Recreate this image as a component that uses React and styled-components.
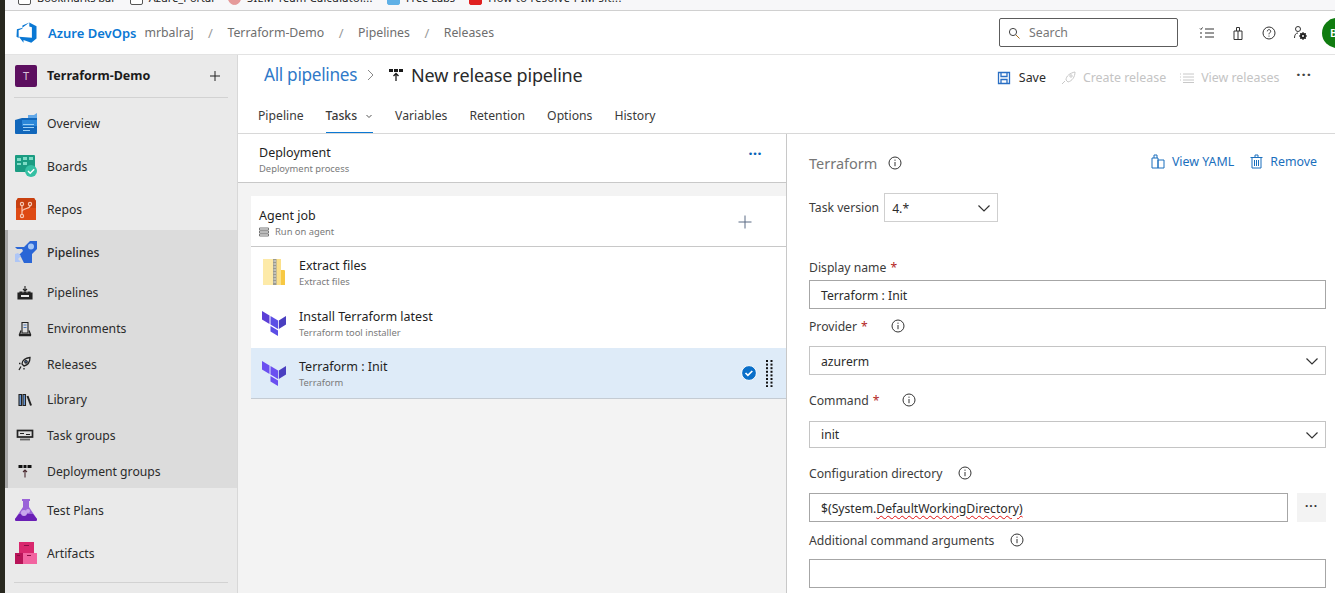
import React from "react";
import styled, { createGlobalStyle } from "styled-components";

const Global = createGlobalStyle`
  html, body { margin: 0; padding: 0; background: #fff; overflow: hidden; }
  body { font-family: "Noto Sans", "Open Sans", sans-serif; font-size: 12px; color: #252423; }
  * { box-sizing: border-box; }
`;

const Page = styled.div`display: flex; width: 1335px; height: 593px; overflow: hidden; background: #fff;`;
const WindowEdge = styled.div`width: 5px; flex: none; background: #28281f;`;
const Shell = styled.div`flex: 1; min-width: 0; display: flex; flex-direction: column;`;

const BrowserBar = styled.div`
  height: 11px; flex: none; background: #f7f7f9; border-bottom: 1px solid #d0d0d0;
  display: flex; align-items: flex-end; gap: 14px; padding-left: 13px; overflow: hidden;
`;
const Bookmark = styled.span`
  display: flex; align-items: center; gap: 6px; font-size: 11px; line-height: 16px; height: 16px;
  letter-spacing: ${p => p.$ls || 0}px; margin-bottom: -1px; transform: translateY(-5px); color: #222; white-space: nowrap;
`;
const BookmarkIcon = styled.i`display: block; width: 13px; height: 13px; border-radius: ${p => p.$round ? "50%" : "2px"}; background: ${p => p.$c}; border: 1px solid ${p => p.$b || p.$c};`;

const Header = styled.header`
  height: 44px; flex: none; display: flex; align-items: center; border-bottom: 1px solid #e3e3e3;
  padding-left: 11px;
`;
const Brand = styled.span`font-size: 13px; font-weight: 600; color: #0a78d4; margin-left: 11px;`;
const Crumb = styled.span`font-size: 12.3px; color: #6e6e6e;`;
const CrumbSep = styled.span`font-size: 13px; color: #9a9a9a; margin: 0 14.5px;`;
const Org = styled(Crumb)`margin-left: 8px;`;
const Spacer = styled.div`flex: 1;`;
const SearchBox = styled.div`
  width: 179px; height: 29px; border: 1px solid #5c5c5c; border-radius: 2px; display: flex; align-items: center;
  padding-left: 8px; gap: 9px; color: #777; font-size: 12.3px; margin-right: 21px;
`;
const HeaderIcons = styled.div`display: flex; align-items: center; gap: 15px;`;
const Avatar = styled.div`
  width: 30px; height: 30px; flex: none; border-radius: 50%; background: #107c10; color: #fff; font-size: 11px; font-weight: 600;
  display: flex; align-items: center; padding-left: 8px; margin-left: -1px; margin-right: -17px;
`;

const Body = styled.div`flex: 1; min-height: 0; display: flex;`;
const Sidebar = styled.nav`width: 233px; flex: none; background: #eaeaea; border-right: 1px solid #d8d8d8; overflow: hidden;`;
const ProjectRow = styled.div`height: 43px; margin: 0 9px; display: flex; align-items: center; border-bottom: 1px solid #d2d2d2; padding-left: 1px; padding-bottom: 1px;`;
const ProjectBadge = styled.div`
  width: 22px; height: 22px; border-radius: 2px; background: #5c0f5f; color: #d9c0d9; font-size: 11px;
  display: flex; align-items: center; justify-content: center;
`;
const ProjectName = styled.span`font-size: 12.5px; font-weight: 700; color: #1b1b1b; margin-left: 10px; flex: 1;`;
const PlusMark = styled.span`display: flex; margin-right: 7px;`;
const MainItem = styled.div`height: 43px; display: flex; align-items: center; padding: 1px 0 0 10px; gap: 10px; font-size: 12.2px; color: #2b2b2b;`;
const ActiveGroup = styled.div`background: #dcdcdc; border-left: 3px solid #a8a8a8; height: 258px;`;
const ActiveHead = styled(MainItem)`padding-left: 7px; font-weight: 500;`;
const SubList = styled.div`display: flex; flex-direction: column; margin-top: 2px;`;
const SubItem = styled.div`height: 35.7px; display: flex; align-items: center; gap: 12px; padding-left: 7px; font-size: 12.2px; color: #2b2b2b;`;
const SideRule = styled.div`height: 1px; margin: 8px 9px 0; background: #d2d2d2;`;
const FirstItems = styled.div`padding-top: 3px;`;

const Main = styled.main`flex: 1; min-width: 0; display: flex; flex-direction: column;`;
const TitleRow = styled.div`height: 45px; flex: none; display: flex; align-items: center; padding: 0 0 6px 26px;`;
const AllLink = styled.span`font-size: 17.2px; color: #2f79c8; letter-spacing: -0.3px;`;
const Chevron = styled.span`display: flex; margin: 0 12px 0 9px;`;
const TitleText = styled.span`font-size: 18px; color: #2a2a2a; margin-left: 7px; letter-spacing: -0.2px;`;
const Actions = styled.div`display: flex; align-items: center; margin-top: 6px; margin-right: 23px;`;
const Action = styled.span`display: flex; align-items: center; gap: ${p => p.$gap || 6}px; font-size: 12.4px; color: ${p => p.$off ? "#c4c4c4" : "#2b2b2b"}; margin-right: ${p => p.$mr || 14}px;`;
const MoreDots = styled.span`font-size: 15px; font-weight: 700; color: #444; letter-spacing: 1px; line-height: 1; margin-left: 3px; margin-top: -6px;`;

const Tabs = styled.div`height: 34px; flex: none; display: flex; gap: 22px; padding-left: 20px; border-bottom: 1px solid #d8d8d8;`;
const Tab = styled.div`
  height: 33px; display: flex; align-items: center; gap: ${p => p.$on ? 8 : 6}px; font-size: 12.2px; color: #3a3a3a;
  padding-bottom: ${p => p.$on ? 1 : 3}px;
  ${p => p.$on && "border-bottom: 1px solid #0a78d4; font-weight: 500;"}
`;

const Split = styled.div`flex: 1; min-height: 0; display: flex;`;
const LeftPanel = styled.section`width: 549px; flex: none; background: #f3f3f3; border-right: 1px solid #c8c8c8;`;
const DeployHead = styled.div`height: 49px; background: #fff; border-bottom: 1px solid #c8c8c8; display: flex; align-items: center; padding: 2px 24px 0 21px;`;
const TitleStack = styled.div`flex: 1; display: flex; flex-direction: column;`;
const Big = styled.span`font-size: 12.5px; line-height: 18px; color: #1f1f1f;`;
const Small = styled.span`font-size: 9.4px; line-height: 11px; color: #7a7a7a; display: flex; align-items: center; gap: 6px; margin-top: 1px;`;
const Dots3 = styled.span`font-size: 14px; font-weight: 800; color: #0a63b8; letter-spacing: 0.5px; line-height: 1; margin-top: -10px;`;
const Job = styled.div`
  margin: 13px 0 0 13px; height: 51px; background: #fff; border-bottom: 1px solid #c8c8c8; display: flex; align-items: center; padding: 2px 34px 0 8px;
`;
const TaskRow = styled.div`
  margin-left: 13px; height: ${p => p.$h || 51}px; display: flex; align-items: center; padding: 0 0 ${p => p.$pb || 0}px 11px; gap: 13px;
  background: ${p => p.$on ? "#deebf8" : "#fff"}; ${p => p.$on && "border-bottom: 1px solid #c4cbd3;"}
`;
const TaskEnd = styled.div`display: flex; align-items: center; gap: 9px; padding-right: 13px;`;

const RightPanel = styled.section`flex: 1; min-width: 0; padding: 0 9px 0 22px; overflow: hidden;`;
const TaskHead = styled.div`height: 59px; display: flex; align-items: center; padding-right: 9px;`;
const TaskTitle = styled.span`font-size: 14.5px; color: #777; margin-right: 11px; margin-top: -2px;`;
const LinkAction = styled.span`display: flex; align-items: center; gap: 7px; color: #1a6fbd; font-size: 12.4px; margin-left: 16px; margin-top: -4px;`;
const TitleInfo = styled.span`display: flex; margin-top: -2px;`;
const VersionRow = styled.div`display: flex; align-items: center; gap: 5px; height: 29px;`;
const Lbl = styled.label`display: flex; align-items: center; font-size: 12.2px; color: #3c3c3c; height: ${p => p.$h || 18}px; margin-top: ${p => p.$mt || 0}px;`;
const Req = styled.span`color: #b3261e; margin-left: 4px;`;
const InfoWrap = styled.span`display: flex; margin-left: ${p => p.$ml || 16}px;`;
const SmallSelect = styled.div`
  width: 114px; height: 29px; border: 1px solid #cfcfcf; display: flex; align-items: center; justify-content: space-between;
  padding: 1px 6px 0 7px; font-size: 12.2px; color: #2b2b2b;
`;
const Field = styled.div`
  height: ${p => p.$h || 29}px; flex: ${p => p.$grow ? 1 : "none"}; border: 1px solid ${p => p.$soft ? "#c4c4c4" : "#a6a6a6"};
  display: flex; align-items: center; justify-content: space-between;
  padding: ${p => p.$h ? 0 : 1}px 6px 0 11px; font-size: 12.2px; color: #2b2b2b; margin-top: ${p => p.$mt || 0}px;
`;
const PathRow = styled.div`display: flex; gap: 9px; margin-top: ${p => p.$mt || 0}px;`;
const EllipsisBtn = styled.div`width: 29px; height: 29px; background: #f3f3f3; color: #333; display: flex; align-items: center; justify-content: center; font-weight: 700; font-size: 12px; letter-spacing: 1px; padding-bottom: 4px;`;
const Spell = styled.span`text-decoration: underline wavy #e01010 1px; text-underline-offset: 2px;`;

const Info = () => (
  <svg width="14" height="14" viewBox="0 0 14 14" fill="none" stroke="#333">
    <circle cx="7" cy="7" r="6" />
    <path d="M7 6v4.2" /><path d="M7 3.6v1.2" />
  </svg>
);
const Caret = ({ c = "#333", s = 14 }) => (
  <svg width={s} height={s} viewBox="0 0 14 14" fill="none" stroke={c} strokeWidth="1.2"><path d="M1.5 4.5 7 10l5.5-5.5" /></svg>
);
const Logo = () => (
  <svg width="21" height="21" viewBox="0 0 21 21" fill="#0a78d4">
    <path d="M20.5 4.2v12.4l-5.2 4.2-7.8-2.9v2.8l-4.6-5.9 13 1V5.2l-2.6-.6V.6z" />
    <path d="M13.4.6 6 6 .9 7.2.5 14.8l2.2 1.1-.1-7.6L6.4 6.8V3.4z" />
  </svg>
);
const Overview = () => (
  <svg width="22" height="22" viewBox="0 0 22 22">
    <path d="M7 6h6V3h6l3-2v20H7z" fill="#62a8e8" />
    <path d="M0 8l7-2h15v15a1 1 0 0 1-1 1H1a1 1 0 0 1-1-1z" fill="#1167bb" />
    <path d="M7 8h15v6H7z" fill="#2b87d8" />
    <path d="M8 12h11v1H8zM8 15h11v1H8zM8 18h7v1H8z" fill="#9cd0f5" />
  </svg>
);
const Boards = () => (
  <svg width="22" height="22" viewBox="0 0 22 22">
    <rect y="0" width="20" height="17" rx="1" fill="#1b9c82" />
    <path d="M2 3h4v3H2zM8 2h4v3H8zM14 2h4v3h-4zM2 8h4v2H2zM8 7h4v3H8z" fill="#7fdcc6" />
    <circle cx="16" cy="16" r="6" fill="#35c0a3" />
    <path d="m13 16 2.2 2.2 4-4" stroke="#fff" strokeWidth="1.5" fill="none" />
  </svg>
);
const Repos = () => (
  <svg width="22" height="22" viewBox="0 0 22 22">
    <path d="M3 0h16l2 3v19H1V3z" fill="#de4a14" />
    <path d="M1 3l2-3h16l2 3v7H1z" fill="#c8400f" />
    <g fill="none" stroke="#f7c9b4" strokeWidth="1.2">
      <circle cx="7" cy="6" r="1.6" /><circle cx="15" cy="6" r="1.6" /><circle cx="7" cy="18" r="1.6" />
      <path d="M7 8v8M15 8c0 3-8 2-8 6" />
    </g>
  </svg>
);
const PipelinesBig = () => (
  <svg width="22" height="22" viewBox="0 0 22 22">
    <path d="M0 6h9l6-6h7v8l-5 5v9H9L6 16l-2-2 4-4-1-2H2z" fill="#2a66d6" />
    <circle cx="16" cy="5.500" r="3" fill="#a5c6f5" />
    <path d="M3 12l3 3-3 3 3 3H0v-8z" fill="#aec6f6" />
  </svg>
);
const Flask = () => (
  <svg width="22" height="22" viewBox="0 0 22 22">
    <path d="M7 0h8v2h-1v6l8 12a2 2 0 0 1-1 2H1a2 2 0 0 1-1-2L8 8V2H7z" fill="#9a63d8" />
    <path d="M4 15h14l4 5a2 2 0 0 1-1 2H1a2 2 0 0 1-1-2z" fill="#6a1fb5" />
    <circle cx="9" cy="14" r="3" fill="#c8a6ec" /><circle cx="13" cy="12" r="2" fill="#c8a6ec" />
  </svg>
);
const Artifacts = () => (
  <svg width="22" height="22" viewBox="0 0 22 22">
    <rect x="4" y="0" width="15" height="11" fill="#d9286e" />
    <rect x="0" y="11" width="8" height="11" fill="#b81458" />
    <rect x="8" y="11" width="14" height="11" fill="#f264a0" />
    <path d="M9 3h5v1H9zM2 13h3v1H2zM12 13h4v1h-4z" fill="#8a0f45" />
  </svg>
);
const Mini = ({ children }) => (
  <svg width="20" height="16" viewBox="0 0 20 16" fill="none" stroke="#222" strokeWidth="1.1">{children}</svg>
);
const iPipe = <Mini><path d="M3 8h2V7h2v1h2V7h2v1h2V7h2v1h2v6H3z" fill="#222" /><path d="M10 1v5M8 4l2 2 2-2" /><path d="M6 11h8" stroke="#e8e8e8" strokeWidth="2" /></Mini>;
const iEnv = <Mini><path d="M7 1.500h6V12H7z" /><path d="M8.500 4h3M8.500 6.500h3" stroke="#4a76b8" /><path d="M6 9.500l-1.500 4h11l-1.500-4M4 14.500h12" strokeWidth="1.300" /></Mini>;
const iRel = <Mini><path d="M7 8c0-3.500 3.500-6 8-6.500 0 4.500-2 7.500-6 8.500z" strokeWidth="1.300" /><circle cx="11" cy="5.800" r="1.300" fill="#4a76b8" /><path d="M6 10.500l-2 3.500M5.500 7.500H4M9 12v1.500" strokeWidth="1.300" /></Mini>;
const iLib = <Mini><path d="M4 2.500h2.500v11H4zM8 2.500h2.500v11H8z" fill="#6a9ad8" /><path d="M12.500 4l3.500 9.500" strokeWidth="2" /></Mini>;
const iTask = <Mini><rect x="2.500" y="2.500" width="15" height="6.500" fill="none" strokeWidth="1.700" /><path d="M5 5.500h4M11 6.500h4" strokeWidth="1.200" /><path d="M5 11.500h10" strokeWidth="1.800" stroke="#666" /></Mini>;
const iDep = <Mini><path d="M3.500 2h4v3h-4zM8.500 2h3v3h-3zM12.500 2h4v3h-4z" fill="#111" stroke="none" /><path d="M10 14.500V7M8 9l2-2 2 2" stroke="#4a2a30" /></Mini>;

const PipeGlyph = () => (
  <svg width="16" height="14" viewBox="0 0 16 14"><path d="M1 1h4v3H1zM6 1h4v3H6zM11 1h4v3h-4z" fill="#1a1a1a" /><path d="M8 13V6M5.500 8 8 5.500 10.500 8" stroke="#1a1a1a" fill="none" strokeWidth="1.300" /></svg>
);
const Terraform = ({ on }) => (
  <svg width="24" height="26" viewBox="0 0 24 26" fill={on ? "#6a4ff0" : "#5c4ee5"}>
    <path d="M0 1l7.500 4.400v8.600L0 9.600z" fill={on ? "#6a4ff0" : "#5c3fd6"} />
    <path d="M8.500 6l7.500 4.400V19L8.500 14.600z" />
    <path d="M16.800 10.400 24 6v8.600L16.800 19z" fill="#4a3fc0" />
    <path d="M8.500 16l7.500 4.400V26L8.500 21.600z" />
  </svg>
);
const Zip = () => (
  <svg width="24" height="28" viewBox="0 0 24 28">
    <path d="M1 1h18v26H1z" fill="#fbe08a" />
    <path d="M19 12h3a1 1 0 0 1 1 1v14h-4z" fill="#f7c843" />
    <path d="M1 1h10v26H1z" fill="#fdeaa8" />
    <path d="M11 1h3.500v26H11z" fill="#9a9a90" />
    <path d="M11.500 3h2.500M11.500 6h2.500M11.500 9h2.500M11.500 12h2.500M11.500 15h2.500M11.500 18h2.500M11.500 21h2.500M11.500 24h2.500" stroke="#e6e6e0" />
  </svg>
);
const Check = () => (
  <svg width="16" height="16" viewBox="0 0 16 16"><circle cx="8" cy="8" r="7.400" fill="#0a6fc9" stroke="#fff" /><path d="m4.500 8 2.400 2.400 4.400-4.400" stroke="#fff" strokeWidth="1.700" fill="none" /></svg>
);
const Grip = () => (
  <svg width="7" height="27" viewBox="0 0 7 27" fill="#111">
    {[0, 1, 2, 3, 4, 5, 6, 7].map(i => (
      <g key={i}><rect x="0" y={i * 3.6} width="2" height="2" /><rect x="4.500" y={i * 3.6} width="2" height="2" /></g>
    ))}
  </svg>
);
const Line = ({ children, w = 16, h = 16, c = "#333", sw = 1 }) => (
  <svg width={w} height={h} viewBox={`0 0 ${w} ${h}`} fill="none" stroke={c} strokeWidth={sw}>{children}</svg>
);

const subItems = [
  [iPipe, "Pipelines"], [iEnv, "Environments"], [iRel, "Releases"],
  [iLib, "Library"], [iTask, "Task groups"], [iDep, "Deployment groups"],
];

export default function App() {
  return (
    <Page>
      <Global />
      <WindowEdge />
      <Shell>
        <BrowserBar>
          <Bookmark><BookmarkIcon $c="#fff" $b="#555" />Bookmarks bar</Bookmark>
          <Bookmark><BookmarkIcon $c="#fff" $b="#555" />Azure_Portal</Bookmark>
          <Bookmark $ls={0.3}><BookmarkIcon $round $c="#e59a9a" />SIEM Team Calculator...</Bookmark>
          <Bookmark><BookmarkIcon $c="#5fb0e6" />Free Labs</Bookmark>
          <Bookmark $ls={0.4}><BookmarkIcon $c="#e02020" />How to resolve PIM sit...</Bookmark>
        </BrowserBar>
        <Header>
          <Logo />
          <Brand>Azure DevOps</Brand>
          <Org>mrbalraj</Org>
          <CrumbSep>/</CrumbSep>
          <Crumb>Terraform-Demo</Crumb>
          <CrumbSep>/</CrumbSep>
          <Crumb>Pipelines</Crumb>
          <CrumbSep>/</CrumbSep>
          <Crumb>Releases</Crumb>
          <Spacer />
          <SearchBox>
            <Line w={12} h={12} c="#444"><circle cx="5" cy="5" r="3.600" /><path d="m8 8 3.500 3.500" stroke="#a8701f" /></Line>
            Search
          </SearchBox>
          <HeaderIcons>
            <Line><path d="M6 4h9M6 8h9M6 12h9" /><path d="M1 3.500l1 1 1.500-2M1 8h2M1 12h2" /></Line>
            <Line><path d="M4 6h8v8.500H4zM6.500 6V2.500h3V6M8 6v8" /></Line>
            <Line><circle cx="8" cy="8" r="6" /><path d="M6.300 6.300c0-2.200 3.400-2.200 3.400 0 0 1.400-1.700 1.400-1.700 3M8 10.600v1" /></Line>
            <Line><circle cx="6" cy="4" r="2.500" /><path d="M2.500 13c0-3.500 1.500-5 3.500-5" /><circle cx="11" cy="11" r="2.800" fill="#222" /><path d="M11 7v8M7 11h8M8.200 8.200l5.600 5.600M13.800 8.200l-5.600 5.600" strokeWidth="1" stroke="#222" /><circle cx="11" cy="11" r="1" fill="#fff" stroke="none" /></Line>
            <Avatar>B</Avatar>
          </HeaderIcons>
        </Header>
        <Body>
          <Sidebar>
            <ProjectRow>
              <ProjectBadge>T</ProjectBadge>
              <ProjectName>Terraform-Demo</ProjectName>
              <PlusMark><Line w={12} h={12} c="#222"><path d="M6 1v10M1 6h10" /></Line></PlusMark>
            </ProjectRow>
            <FirstItems>
              <MainItem><Overview />Overview</MainItem>
              <MainItem><Boards />Boards</MainItem>
              <MainItem><Repos />Repos</MainItem>
            </FirstItems>
            <ActiveGroup>
              <ActiveHead><PipelinesBig />Pipelines</ActiveHead>
              <SubList>
                {subItems.map(([icon, label]) => <SubItem key={label}>{icon}{label}</SubItem>)}
              </SubList>
            </ActiveGroup>
            <MainItem><Flask />Test Plans</MainItem>
            <MainItem><Artifacts />Artifacts</MainItem>
            <SideRule />
          </Sidebar>
          <Main>
            <TitleRow>
              <AllLink>All pipelines</AllLink>
              <Chevron><Line w={10} h={14} c="#888"><path d="m2 2 5 5-5 5" /></Line></Chevron>
              <PipeGlyph />
              <TitleText>New release pipeline</TitleText>
              <Spacer />
              <Actions>
                <Action $gap={8} $mr={15}>
                  <Line w={14} h={14} c="#2a6fc4" sw={1.3}><path d="M1.500 1.500h11v11h-11z" /><path d="M4 1.500v4h6v-4M4 12.500v-4h6v4" /></Line>
                  Save
                </Action>
                <Action $off>
                  <Line w={16} h={16} c="#c8c8c8"><path d="M5 10c0-4 4-7 9-8 0 5-3 9-7 10zM4 11l-3 3" /><circle cx="10" cy="6" r="1.200" /></Line>
                  Create release
                </Action>
                <Action $off>
                  <Line w={15} h={12} c="#c8c8c8"><path d="M3 2h11M3 5h11M3 8h11M3 10.500h11M0 2h1M0 5h1M0 8h1" /></Line>
                  View releases
                </Action>
                <MoreDots>···</MoreDots>
              </Actions>
            </TitleRow>
            <Tabs>
              <Tab>Pipeline</Tab>
              <Tab $on>Tasks <Line w={8} h={8} c="#555"><path d="m1.500 3 2.500 2.500L6.500 3" /></Line></Tab>
              <Tab>Variables</Tab>
              <Tab>Retention</Tab>
              <Tab>Options</Tab>
              <Tab>History</Tab>
            </Tabs>
            <Split>
              <LeftPanel>
                <DeployHead>
                  <TitleStack>
                    <Big>Deployment</Big>
                    <Small>Deployment process</Small>
                  </TitleStack>
                  <Dots3>···</Dots3>
                </DeployHead>
                <Job>
                  <TitleStack>
                    <Big>Agent job</Big>
                    <Small>
                      <Line w={10} h={10} c="#777"><path d="M0.500 1h9v2h-9zM0.500 4h9v2h-9zM0.500 7h9v2h-9z" /></Line>
                      Run on agent
                    </Small>
                  </TitleStack>
                  <Line w={14} h={14} c="#5b6b84"><path d="M7 0.500v13M0.500 7h13" /></Line>
                </Job>
                <TaskRow $pb={1}>
                  <Zip />
                  <TitleStack>
                    <Big>Extract files</Big>
                    <Small>Extract files</Small>
                  </TitleStack>
                </TaskRow>
                <TaskRow $h={50}>
                  <Terraform />
                  <TitleStack>
                    <Big>Install Terraform latest</Big>
                    <Small>Terraform tool installer</Small>
                  </TitleStack>
                </TaskRow>
                <TaskRow $on>
                  <Terraform on />
                  <TitleStack>
                    <Big>Terraform : Init</Big>
                    <Small>Terraform</Small>
                  </TitleStack>
                  <TaskEnd><Check /><Grip /></TaskEnd>
                </TaskRow>
              </LeftPanel>
              <RightPanel>
                <TaskHead>
                  <TaskTitle>Terraform</TaskTitle>
                  <TitleInfo><Info /></TitleInfo>
                  <Spacer />
                  <LinkAction>
                    <Line w={14} h={15} c="#1a6fbd"><path d="M1 4h6v10H1zM7 6h6v8H7zM3 4V1h3v3" /></Line>
                    View YAML
                  </LinkAction>
                  <LinkAction>
                    <Line w={13} h={15} c="#1a6fbd"><path d="M2 3.500h9V14H2zM0.500 3.500h12M5 3V1h3v2M4.500 6v6M6.500 6v6M8.500 6v6" /></Line>
                    Remove
                  </LinkAction>
                </TaskHead>
                <VersionRow>
                  <Lbl>Task version</Lbl>
                  <SmallSelect>4.*<Caret /></SmallSelect>
                </VersionRow>
                <Lbl $mt={36}>Display name<Req>*</Req></Lbl>
                <Field $mt={4}>Terraform : Init</Field>
                <Lbl $mt={7} $h={20}>Provider<Req>*</Req><InfoWrap $ml={23}><Info /></InfoWrap></Lbl>
                <Field $mt={10} $soft>azurerm<Caret /></Field>
                <Lbl $mt={16} $h={18}>Command<Req>*</Req><InfoWrap $ml={23}><Info /></InfoWrap></Lbl>
                <Field $mt={12} $h={27} $soft>init<Caret /></Field>
                <Lbl $mt={15} $h={20}>Configuration directory<InfoWrap><Info /></InfoWrap></Lbl>
                <PathRow $mt={10}>
                  <Field $grow>
                    <span>$(System.<Spell>DefaultWorkingDirectory)</Spell></span>
                  </Field>
                  <EllipsisBtn>···</EllipsisBtn>
                </PathRow>
                <Lbl $mt={9} $h={18}>Additional command arguments<InfoWrap><Info /></InfoWrap></Lbl>
                <Field $mt={10} />
              </RightPanel>
            </Split>
          </Main>
        </Body>
      </Shell>
    </Page>
  );
}
